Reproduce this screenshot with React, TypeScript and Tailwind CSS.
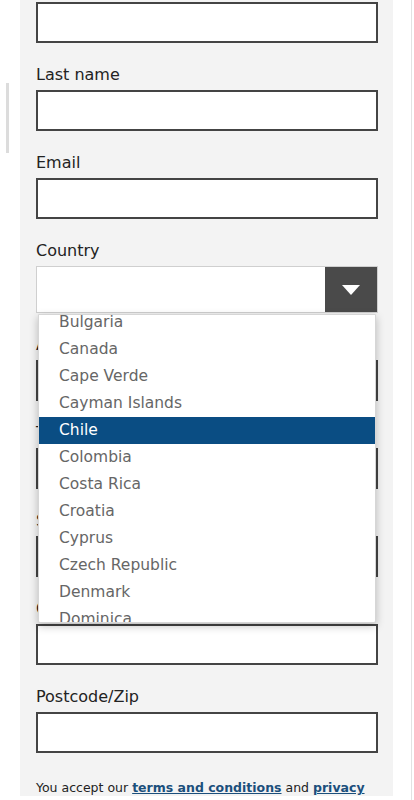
import React from "react";

const font = { fontFamily: '"DejaVu Sans", "Liberation Sans", sans-serif' };

const countries = [
  "Bulgaria",
  "Canada",
  "Cape Verde",
  "Cayman Islands",
  "Chile",
  "Colombia",
  "Costa Rica",
  "Croatia",
  "Cyprus",
  "Czech Republic",
  "Denmark",
  "Dominica",
];

function Label({ children }: { children: React.ReactNode }) {
  return <label className="mt-[23px] h-[24px] text-[16px] leading-[18px] text-[#222]">{children}</label>;
}

function Field({ label }: { label?: string }) {
  return (
    <div className="flex w-[342px] flex-col">
      {label ? <Label>{label}</Label> : null}
      <div className="h-[41px] w-[342px] border-2 border-[#444] bg-white" />
    </div>
  );
}

function CountrySelect() {
  return (
    <div className="relative z-10 flex w-[342px] flex-col">
      <Label>Country</Label>
      <div className="flex h-[47px] w-[342px] border border-[#cfcfcf] bg-white">
        <div className="flex-1" />
        <div className="flex w-[52px] items-center justify-center bg-[#4a4a4a]">
          <svg width="18" height="10" viewBox="0 0 18 10">
            <path d="M0 0h18L9 10z" fill="#fff" />
          </svg>
        </div>
      </div>
      <div className="absolute left-[2px] right-[2px] top-[95px] h-[309px] overflow-hidden rounded-b-[2px] border border-[#d6d6d6] bg-white shadow-[0_3px_8px_rgba(0,0,0,0.25)]">
        <ul className="-mt-[6px]">
          {countries.map((c) => (
            <li
              key={c}
              className={`h-[27px] pl-[20px] text-[15.5px] leading-[27px] ${
                c === "Chile" ? "bg-[#0a4d83] text-white" : "text-[#666]"
              }`}
            >
              {c}
            </li>
          ))}
        </ul>
      </div>
    </div>
  );
}

export default function App() {
  return (
    <div className="flex h-[800px] w-[414px] overflow-hidden bg-white" style={font}>
      <div className="w-[20px] shrink-0 pl-[6px] pt-[83px]">
        <div className="h-[70px] w-[3px] bg-[#dcdcdc]" />
      </div>
      <div className="h-[796px] w-[373px] shrink-0 overflow-hidden bg-[#f3f3f3] pl-[16px]">
        <div className="pt-[2px]">
          <Field />
        </div>
        <Field label="Last name" />
        <Field label="Email" />
        <CountrySelect />
        <Field label="Address" />
        <Field label="Town/City" />
        <Field label="State/County" />
        <Field label="Country code" />
        <Field label="Postcode/Zip" />
        <p className="mt-[26px] w-[342px] text-[12.5px] leading-[18px] text-[#222]">
          You accept our{" "}
          <a className="font-bold text-[#1b4f7c] underline">terms and conditions</a> and{" "}
          <a className="font-bold text-[#1b4f7c] underline">privacy policy</a>
        </p>
      </div>
      <div className="flex flex-1 justify-end pr-[2px]">
        <div className="h-full w-px bg-[#e2e2e2]" />
      </div>
    </div>
  );
}
